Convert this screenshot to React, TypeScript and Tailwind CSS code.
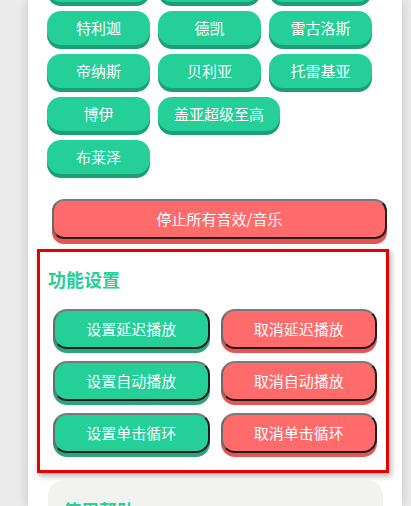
import React from "react";

const heroes = [
  ["迪迦", "戴拿", "盖亚"],
  ["特利迦", "德凯", "雷古洛斯"],
  ["帝纳斯", "贝利亚", "托雷基亚"],
  ["博伊", "盖亚超级至高"],
  ["布莱泽"],
];

const settings = [
  ["设置延迟播放", "取消延迟播放"],
  ["设置自动播放", "取消自动播放"],
  ["设置单击循环", "取消单击循环"],
];

const font = { fontFamily: '"Noto Sans CJK SC", "Noto Sans", sans-serif' };

export default function App() {
  return (
    <div className="h-[506px] w-[411px] overflow-hidden bg-[#ececec]" style={font}>
      <div className="ml-[28px] mr-[9px] flex h-full flex-col bg-white shadow-[0_0_12px_rgba(0,0,0,0.18)]">
        {/* sound buttons */}
        <div className="-mt-[32px] flex flex-col gap-[9px] pl-[19px]">
          {heroes.map((row, i) => (
            <div key={i} className="flex gap-2">
              {row.map((name) => (
                <button
                  key={name}
                  className="h-[34px] min-w-[103px] rounded-[14px] bg-[#24cf98] px-4 text-[15px] text-white shadow-[0_4px_0_#1c9f76]"
                >
                  {name}
                </button>
              ))}
            </div>
          ))}
        </div>

        {/* stop all */}
        <div className="mt-[25px] pl-[24px] pr-[15px]">
          <button className="h-[40px] w-full rounded-[12px] border-2 border-t-[#7a7a7a] border-l-[#6a6a6a] border-r-[#222] border-b-[#222] bg-[#ff6b6b] text-[15px] text-white shadow-[0_5px_0_#e85454]">
            停止所有音效/音乐
          </button>
        </div>

        {/* settings section */}
        <div className="ml-[9px] mr-[13px] mt-[10px] h-[224px] shrink-0 border-[3px] border-[#e60000] shadow-[2px_3px_6px_rgba(0,0,0,0.3)]">
          <h2 className="pl-[8px] pt-[14px] text-[18px] font-bold leading-[26px] text-[#24cf98]">功能设置</h2>
          <div className="mt-[17px] grid grid-cols-2 gap-x-[11px] gap-y-[12px] pl-[13px] pr-[9px]">
            {settings.map(([on, off]) => (
              <React.Fragment key={on}>
                <button className="h-[40px] rounded-[14px] border-2 border-t-[#7a7a7a] border-l-[#6a6a6a] border-r-[#1e1e1e] border-b-[#1e1e1e] bg-[#24cf98] text-[15px] text-white shadow-[0_4px_0_#2ea37f]">
                  {on}
                </button>
                <button className="h-[40px] rounded-[14px] border-2 border-t-[#7a7a7a] border-l-[#6a6a6a] border-r-[#1e1e1e] border-b-[#1e1e1e] bg-[#ff6b6b] text-[15px] text-white shadow-[0_4px_0_#e85454]">
                  {off}
                </button>
              </React.Fragment>
            ))}
          </div>
        </div>

        {/* help */}
        <div className="ml-[20px] mr-[19px] mt-[7px] shrink-0 rounded-[16px] bg-[#f2f3f1] px-[15px] pt-[17px] pb-4">
          <h2 className="text-[18px] font-bold leading-[26px] text-[#24cf98]">使用帮助</h2>
        </div>
      </div>
    </div>
  );
}
